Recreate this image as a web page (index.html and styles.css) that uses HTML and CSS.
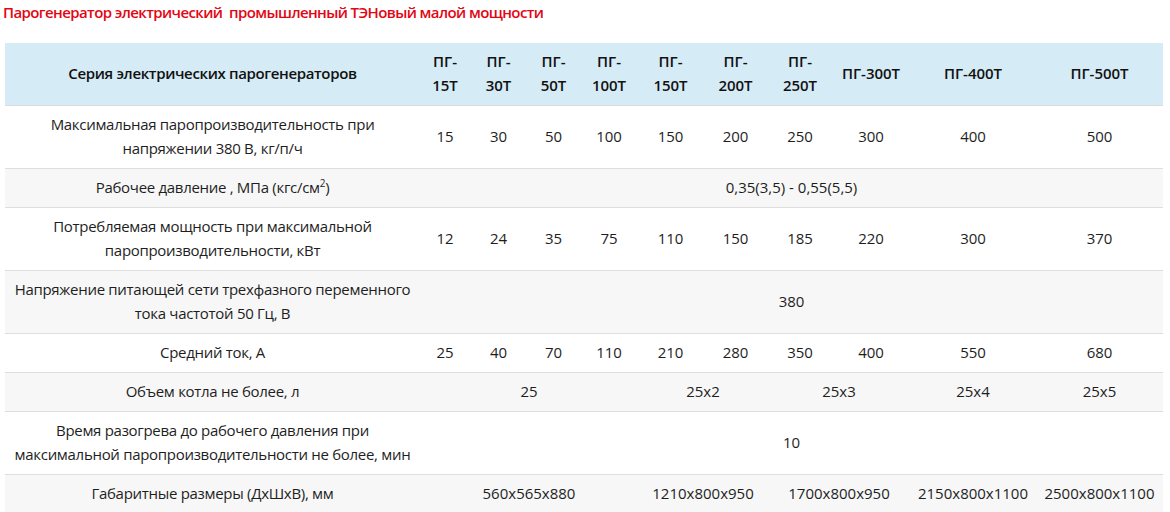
FILE: index.html
```html
<!DOCTYPE html>
<html lang="ru">
<head>
<meta charset="utf-8">
<title>Парогенератор</title>
<link rel="stylesheet" href="styles.css">
</head>
<body>
<h2 class="title">Парогенератор электрический&nbsp; промышленный ТЭНовый малой мощности</h2>
<table class="spec">
  <colgroup>
    <col class="c-name">
    <col class="c15"><col class="c30"><col class="c50"><col class="c100"><col class="c150">
    <col class="c200"><col class="c250"><col class="c300"><col class="c400"><col class="c500">
  </colgroup>
  <thead>
    <tr>
      <th>Серия электрических парогенераторов</th>
      <th>ПГ-<br>15Т</th>
      <th>ПГ-<br>30Т</th>
      <th>ПГ-<br>50Т</th>
      <th>ПГ-<br>100Т</th>
      <th>ПГ-<br>150Т</th>
      <th>ПГ-<br>200Т</th>
      <th>ПГ-<br>250Т</th>
      <th>ПГ-300Т</th>
      <th>ПГ-400Т</th>
      <th>ПГ-500Т</th>
    </tr>
  </thead>
  <tbody>
    <tr>
      <td>Максимальная паропроизводительность при<br>напряжении 380 В, кг/п/ч</td>
      <td>15</td><td>30</td><td>50</td><td>100</td><td>150</td><td>200</td><td>250</td><td>300</td><td>400</td><td>500</td>
    </tr>
    <tr class="alt">
      <td>Рабочее давление , МПа (кгс/см<sup>2</sup>)</td>
      <td colspan="10">0,35(3,5) - 0,55(5,5)</td>
    </tr>
    <tr>
      <td>Потребляемая мощность при максимальной<br>паропроизводительности, кВт</td>
      <td>12</td><td>24</td><td>35</td><td>75</td><td>110</td><td>150</td><td>185</td><td>220</td><td>300</td><td>370</td>
    </tr>
    <tr class="alt">
      <td>Напряжение питающей сети трехфазного переменного<br>тока частотой 50 Гц, В</td>
      <td colspan="10">380</td>
    </tr>
    <tr>
      <td>Средний ток, А</td>
      <td>25</td><td>40</td><td>70</td><td>110</td><td>210</td><td>280</td><td>350</td><td>400</td><td>550</td><td>680</td>
    </tr>
    <tr class="alt">
      <td>Объем котла не более, л</td>
      <td colspan="4">25</td>
      <td colspan="2">25x2</td>
      <td colspan="2">25x3</td>
      <td>25x4</td>
      <td>25x5</td>
    </tr>
    <tr>
      <td>Время разогрева до рабочего давления при<br>максимальной паропроизводительности не более, мин</td>
      <td colspan="10">10</td>
    </tr>
    <tr class="alt">
      <td>Габаритные размеры (ДхШхВ), мм</td>
      <td colspan="4">560x565x880</td>
      <td colspan="2">1210x800x950</td>
      <td colspan="2">1700x800x950</td>
      <td>2150x800x1100</td>
      <td>2500x800x1100</td>
    </tr>
  </tbody>
</table>
</body>
</html>
```
FILE: styles.css
```css
html, body {
  margin: 0;
  padding: 0;
  background: #ffffff;
}

body {
  font-family: "Open Sans", "Noto Sans", "Liberation Sans", sans-serif;
  color: #222222;
}

.title {
  margin: 0 0 0 3px;
  font-size: 15px;
  line-height: 24px;
  font-weight: 600;
  color: #e30613;
  letter-spacing: -0.6px;
}

.spec {
  margin: 19px 0 0 5px;
  width: 1158px;
  table-layout: fixed;
  border-collapse: collapse;
  font-size: 15px;
  line-height: 24px;
}

.c-name { width: 415px; }
.c15 { width: 50px; }
.c30 { width: 57px; }
.c50 { width: 53px; }
.c100 { width: 58px; }
.c150 { width: 65px; }
.c200 { width: 65px; }
.c250 { width: 64px; }
.c300 { width: 78px; }
.c400 { width: 126px; }
.c500 { width: 127px; }

.spec th,
.spec td {
  padding: 6px 2px 8px;
  text-align: center;
  vertical-align: middle;
  white-space: nowrap;
}

.spec thead tr {
  background: #d5ebf5;
  border-bottom: 1px solid #dcdcdc;
}

.spec th {
  font-weight: 600;
  color: #111111;
}

.spec th:first-child {
  letter-spacing: -0.35px;
}

.spec tbody tr {
  border-bottom: 1px solid #dedede;
}

.spec tbody tr.alt {
  background: #f7f7f7;
}

.spec td {
  font-weight: 400;
  color: #1e1e1e;
}

.spec td:first-child {
  letter-spacing: -0.3px;
}

.spec sup {
  font-size: 10px;
  line-height: 0;
  vertical-align: 6px;
}
```
